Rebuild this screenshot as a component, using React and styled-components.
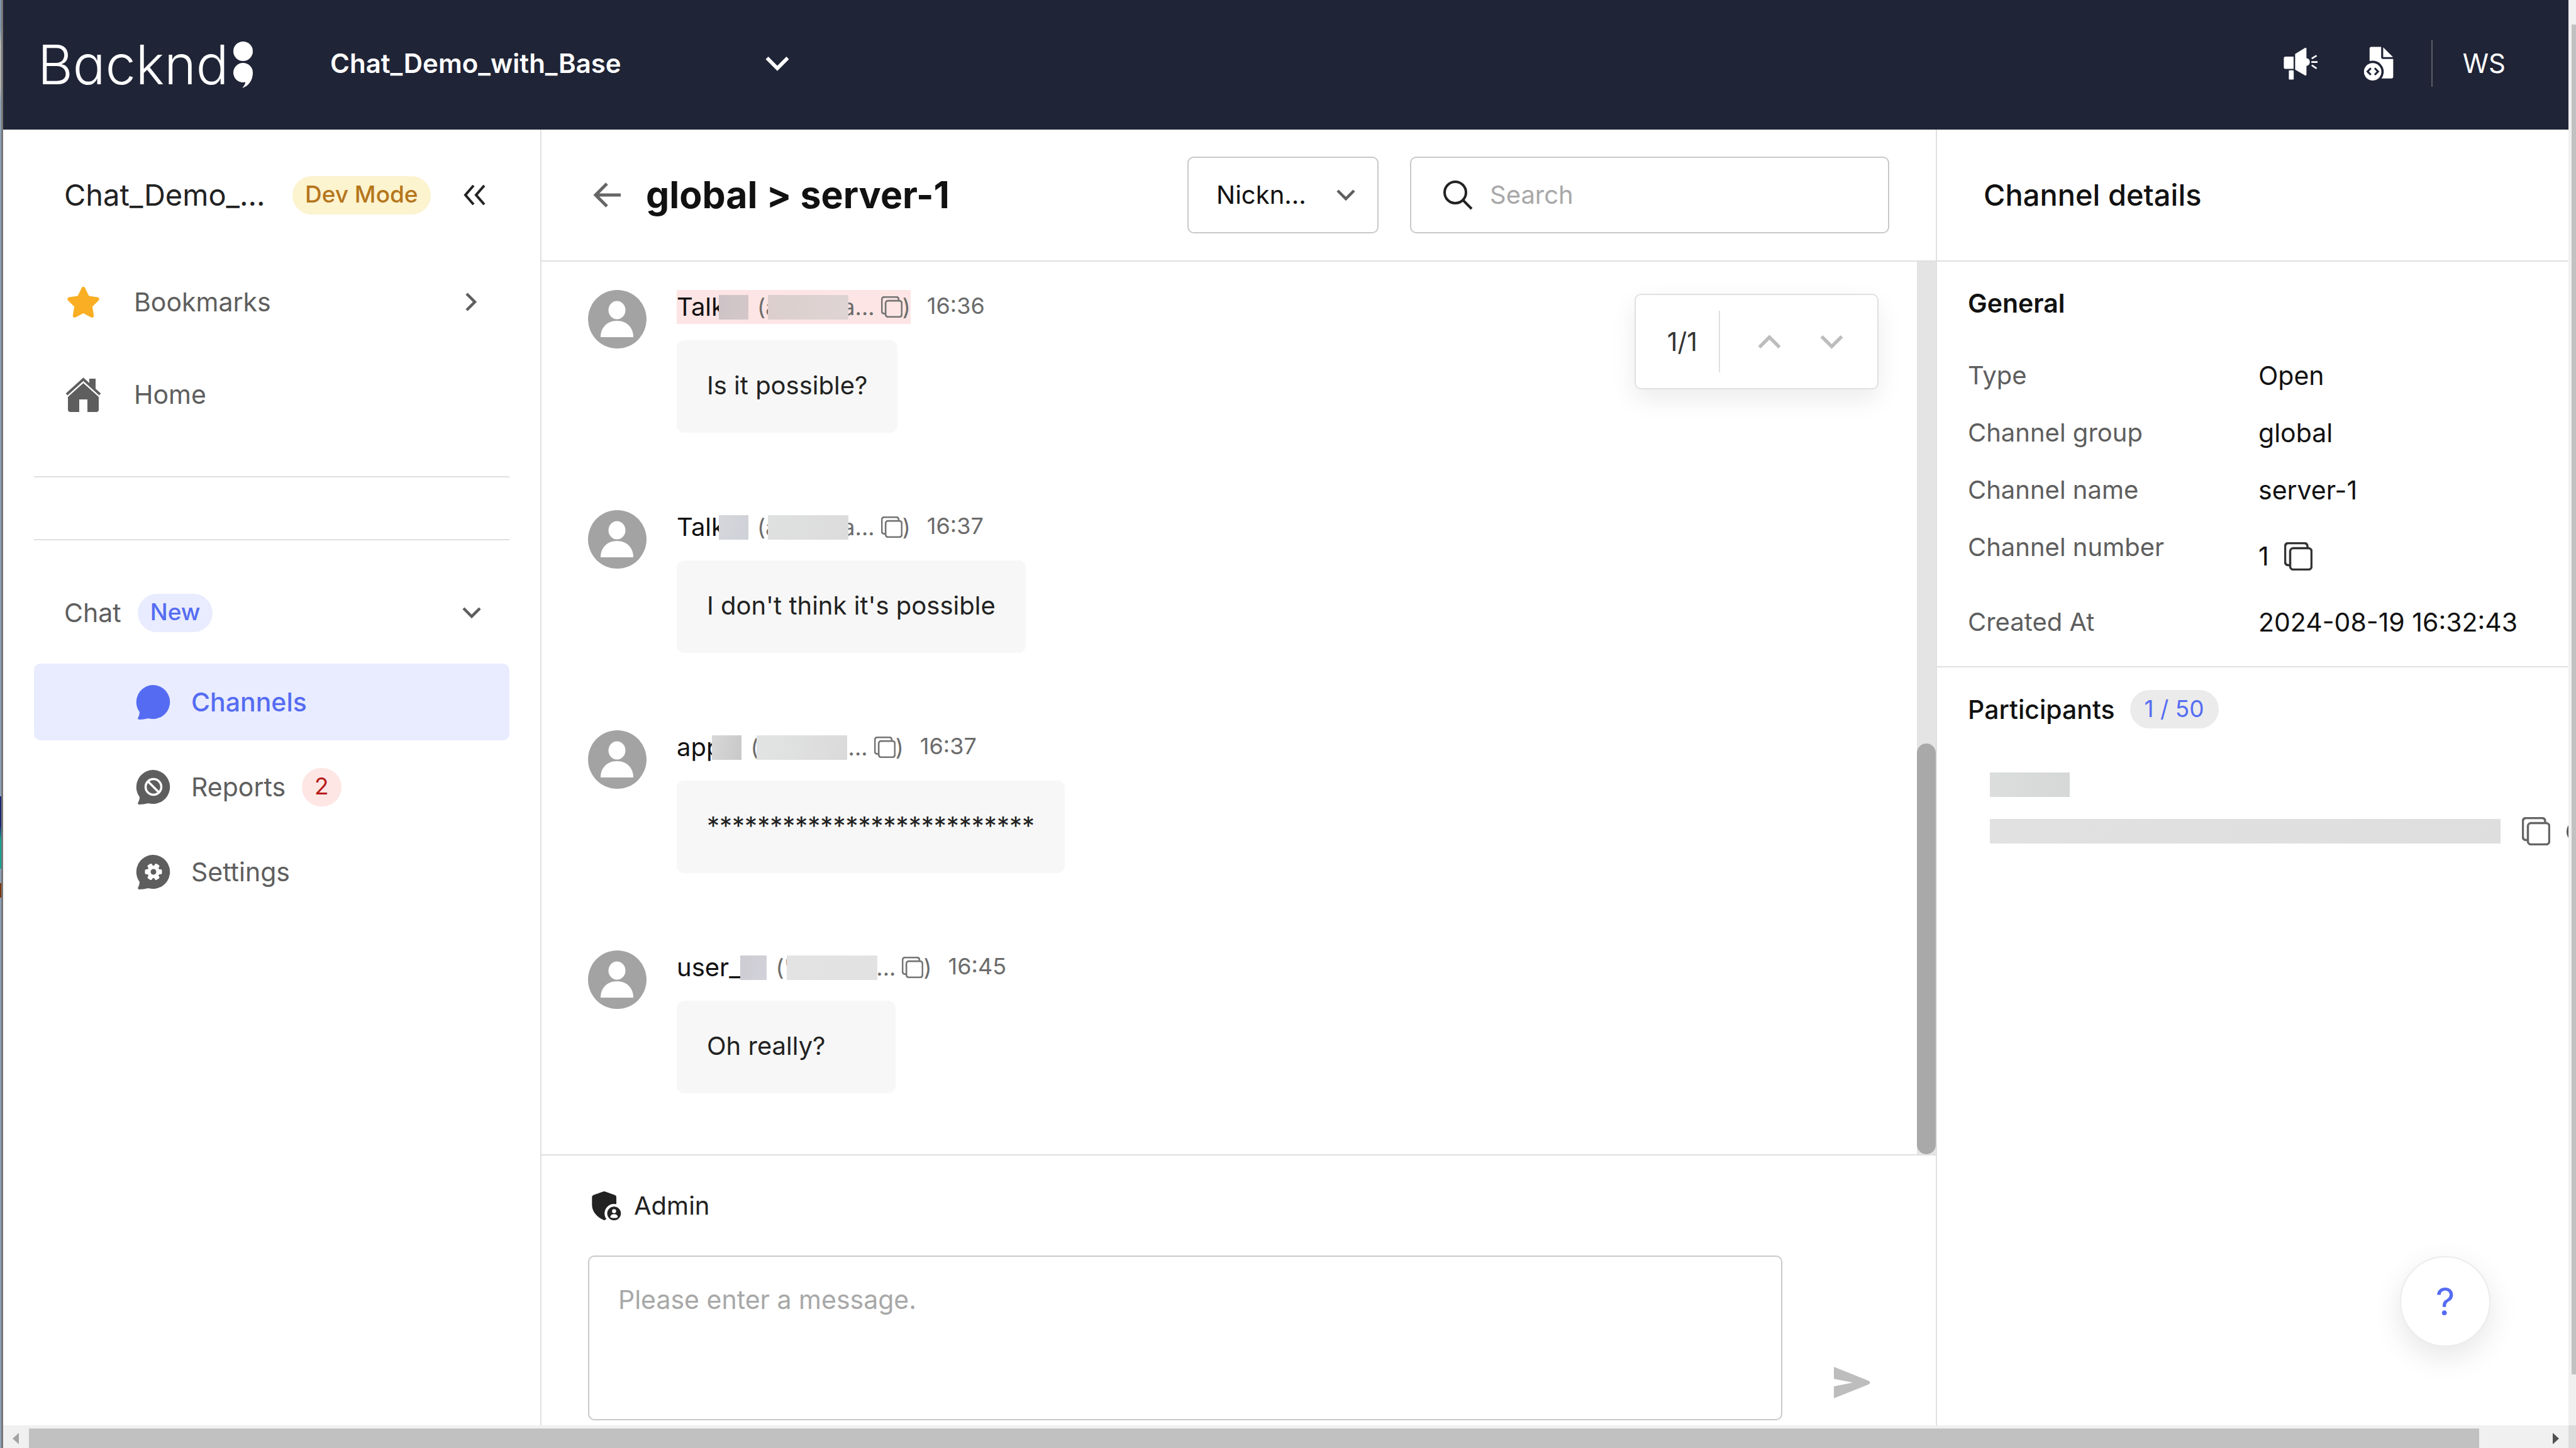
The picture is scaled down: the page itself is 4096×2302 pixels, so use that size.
import styled, { createGlobalStyle, css } from "styled-components";
import { FaStar } from "react-icons/fa6";

const GlobalStyle = createGlobalStyle`
    * {
        box-sizing: border-box;
    }

    body {
        margin: 0;
        font-family: Inter, "Liberation Sans", sans-serif;
        font-size: 41px;
        line-height: 60px;
        color: #111;
        background: #fff;
        overflow: hidden;
    }

    h1, h2, h3, p, ul, dl, dd {
        margin: 0;
        padding: 0;
    }

    ul {
        list-style: none;
    }

    svg {
        display: block;
        flex-shrink: 0;
    }

    button, input, select, textarea {
        font: inherit;
        color: inherit;
        background: none;
        border: 0;
        padding: 0;
        margin: 0;
        outline: none;
    }

    a {
        color: inherit;
        text-decoration: none;
    }
`

const Screen = styled.div`
    display: grid;
    grid-template-columns: 5px minmax(0, 1fr) 12px;
    grid-template-rows: minmax(0, 1fr) 36px;
    height: 100vh;
`

/* sliver of the desktop left of the browser window */
const DesktopEdge = styled.div`
    grid-row: 1 / 3;
    border-right: 3px solid #777;
    background: linear-gradient(
        #8098ae 2%, #b4b4b4 3%, #b4b4b4 6%, #8ca0b5 7%, #8ca0b5 55%,
        #1b2474 55%, #1b2474 57%, #12a594 58%, #12a594 60%, #8ca0b5 60%,
        #8ca0b5 61%, #7e3508 61%, #7e3508 62%, #8ca0b5 62%
    );
`

const Window = styled.div`
    display: flex;
    flex-direction: column;
    position: relative;
    overflow: hidden;
`

/* ---------- browser scrollbars ---------- */

const PageScrollY = styled.div`
    background: #f0f0f0;
    padding: 39px 0 81px 5px;
`

const PageScrollX = styled.div`
    display: flex;
    align-items: center;
    gap: 16px;
    background: #f0f0f0;
    padding: 5px 15px 0;
`

const Thumb = styled.div`
    flex: 1;
    height: 100%;
    background: #c1c1c1;
`

const ThumbSpace = styled.div`
    width: 85px;
`

const ScrollCorner = styled.div`
    background: #dcdcdc;
`

/* ---------- top bar ---------- */

const TopBar = styled.header`
    display: flex;
    align-items: center;
    height: 206px;
    padding: 0 100px 4px 55px;
    background: #1f2436;
    color: #fff;
`

const Logo = styled.a`
    display: flex;
    align-items: center;
    gap: 7px;
    width: 465px;
    padding-top: 4px;
    font-size: 86px;
    font-weight: 350;
    line-height: 74px;
    font-feature-settings: "cv11";
`

const SelectBox = styled.label`
    display: grid;
    grid-template-columns: 1fr auto;
    align-items: center;
    width: ${({ $width }) => $width}px;

    select {
        grid-area: 1 / 1 / 2 / 3;
        appearance: none;
        width: 100%;
        height: 122px;
    }

    svg {
        grid-area: 1 / 2;
        pointer-events: none;
    }
`

const ProjectSelect = styled(SelectBox)`
    font-size: 42px;
    font-weight: 600;

    option {
        color: #111;
    }
`

const TopActions = styled.div`
    display: flex;
    align-items: center;
    margin-left: auto;
`

const IconButton = styled.button`
    display: flex;
    align-items: center;
    justify-content: center;
    color: ${({ $color }) => $color || "inherit"};
`

const DocsButton = styled(IconButton)`
    margin: 0 59px 0 73px;
`

const UserButton = styled.button`
    border-left: 2px solid #5c5f69;
    height: 74px;
    padding-left: 48px;
    font-size: 42px;
`

/* ---------- sidebar ---------- */

const Columns = styled.div`
    display: flex;
    flex: 1;
    min-height: 0;
`

const Sidebar = styled.aside`
    width: 856px;
    flex-shrink: 0;
    padding: 0 49px;
    border-right: 2px solid #e0e0e0;
    color: #5e5e5e;
`

const SidebarHead = styled.div`
    display: flex;
    align-items: center;
    height: 208px;
    padding: 0 38px 0 48px;
`

const ProjectName = styled.h2`
    font-size: 47px;
    font-weight: 400;
    color: #222;
    width: 363px;
`

const tones = {
    yellow: css`
        background: #fcf3cf;
        color: #b5761b;
    `,
    blue: css`
        background: #e9ecfe;
        color: #556cf2;
    `,
    red: css`
        background: #fde6e4;
        color: #b71c1c;
    `,
    grey: css`
        background: #ebebeb;
        color: #556cf2;
    `,
}

const Pill = styled.span`
    display: inline-flex;
    align-items: center;
    justify-content: center;
    height: 61px;
    padding: 0 ${({ $tone }) => ($tone === "grey" ? 23 : 20)}px 2px;
    border-radius: 31px;
    font-size: 37px;
    font-weight: ${({ $tone }) => ($tone === "yellow" || $tone === "blue" ? 500 : 400)};
    ${({ $tone }) => tones[$tone]}
`

const CollapseButton = styled(IconButton)`
    margin-left: auto;
`

const NavList = styled.ul`
    display: flex;
    flex-direction: column;
    gap: 13px;
`

const NavLink = styled.a`
    display: flex;
    align-items: center;
    height: 134px;
    padding: 0 46px 2px 50px;
`

const NavIcon = styled.span`
    display: flex;
    justify-content: center;
    width: 57px;
    margin-right: 52px;
`

const NavChevron = styled.span`
    margin-left: auto;
`

const Rule = styled.hr`
    height: 2px;
    margin: ${({ $top }) => $top}px 0 0;
    border: 0;
    background: #e0e0e0;
`

const GroupButton = styled.button`
    display: flex;
    align-items: center;
    gap: 26px;
    width: 100%;
    height: 122px;
    margin: 54px 0 20px;
    padding: 0 45px 0 48px;

    svg {
        margin-left: auto;
    }
`

const SubLink = styled.a`
    display: flex;
    align-items: center;
    height: 122px;
    padding-left: 162px;
    border-radius: 10px;

    svg {
        margin-right: 33px;
    }

    ${Pill} {
        margin-left: 26px;
    }

    ${({ $active }) => $active && css`
        background: #e9ecfe;
        color: #556cf2;
        font-weight: 500;
    `}
`

/* ---------- chat ---------- */

const Main = styled.main`
    display: flex;
    flex-direction: column;
    flex: 1;
    min-width: 0;
`

const ChatHead = styled.div`
    display: flex;
    align-items: center;
    height: 210px;
    padding: 0 74px 0 82px;
    border-bottom: 2px solid #e0e0e0;
    font-size: 40px;
`

const ChatTitle = styled.h1`
    flex: 1;
    margin-left: 40px;
    font-size: 59px;
    font-weight: 700;
`

const KindSelect = styled(SelectBox)`
    select {
        padding-left: 44px;
        border: 2px solid #c9c9c9;
        border-radius: 10px;
    }

    svg {
        margin-right: 37px;
    }
`

const SearchBox = styled.label`
    display: flex;
    align-items: center;
    gap: 27px;
    width: 762px;
    height: 122px;
    margin-left: 50px;
    padding: 0 50px;
    border: 2px solid #c9c9c9;
    border-radius: 10px;

    input {
        flex: 1;
        min-width: 0;
    }

    input::placeholder {
        color: #a8a8a8;
        opacity: 1;
    }
`

const MessagePane = styled.div`
    display: flex;
    position: relative;
    flex: 1;
    min-height: 0;
`

const MessageList = styled.ul`
    flex: 1;
    padding: 45px 74px 0;
    overflow: hidden;
`

const Message = styled.li`
    display: flex;
    align-items: flex-start;
    gap: 48px;
    height: 350px;
`

const Meta = styled.div`
    display: flex;
    align-items: center;
    gap: 26px;
    height: 54px;
    margin-bottom: 26px;
    font-size: 36px;
    line-height: 50px;
    color: #6b6b6b;

    time {
        padding-bottom: 4px;
    }
`

const Sender = styled.mark`
    display: flex;
    align-items: center;
    height: 54px;
    color: inherit;
    background: ${({ $found }) => ($found ? "#fce5e4" : "none")};
`

const Nick = styled.span`
    font-size: 40px;
    color: #111;
`

/* blurred-out part of a name or an id */
const Mask = styled.span`
    position: relative;
    flex-shrink: 0;
    width: ${({ $width }) => $width}px;
    height: 39px;
    margin-left: -${({ $cut }) => $cut || 0}px;
    margin-right: ${({ $after }) => $after || 0}px;
    background: linear-gradient(100deg, ${({ $from }) => $from || "#dfe0e0"}, ${({ $to }) => $to || "#dcdcdc"});
`

const CopyButton = styled(IconButton)`
    margin-left: ${({ $gap }) => $gap || 0}px;
`

const Bubble = styled.p`
    width: fit-content;
    min-width: 348px;
    height: 147px;
    padding: 0 48px;
    border-radius: 12px;
    background: #f7f7f7;
    color: #222;
    font-size: 40px;
    line-height: 144px;
`

const ListScroll = styled.div`
    display: flex;
    align-items: flex-end;
    width: 30px;
    background: #e4e4e4;

    &::after {
        content: "";
        width: 100%;
        height: 46%;
        border-radius: 15px;
        background: #a9a9a9;
    }
`

const ResultNav = styled.div`
    display: flex;
    align-items: center;
    position: absolute;
    top: 51px;
    right: 91px;
    height: 152px;
    padding: 0 54px 0 50px;
    border: 2px solid #e0e0e0;
    border-radius: 10px;
    background: #fff;
    box-shadow: 0 16px 40px rgba(0, 0, 0, 0.08);
    color: #333;

    button + button {
        margin-left: 62px;
    }
`

const ResultCount = styled.span`
    height: 98px;
    margin-right: 60px;
    padding-right: 34px;
    border-right: 2px solid #e0e0e0;
    line-height: 98px;
`

const Composer = styled.form`
    padding: 57px 74px 8px;
    border-top: 2px solid #e0e0e0;
`

const SenderRole = styled.div`
    display: flex;
    align-items: center;
    gap: 20px;
    height: 46px;
    margin: 0 6px 56px;
    color: #222;
    font-size: 40px;
`

const ComposerRow = styled.div`
    display: flex;
    align-items: flex-end;

    textarea {
        flex: 1;
        height: 262px;
        padding: 38px 46px;
        border: 2px solid #c9c9c9;
        border-radius: 10px;
        resize: none;
    }

    textarea::placeholder {
        color: #a8a8a8;
        opacity: 1;
    }
`

const SendButton = styled(IconButton)`
    height: 120px;
    margin: 0 30px 0 82px;
`

/* ---------- details ---------- */

const Details = styled.aside`
    width: 1006px;
    flex-shrink: 0;
    border-left: 2px solid #e0e0e0;
    overflow: hidden;
`

const DetailsHead = styled.h2`
    height: 210px;
    padding-left: 74px;
    border-bottom: 2px solid #e0e0e0;
    font-size: 47px;
    font-weight: 500;
    line-height: 208px;
`

const Section = styled.section`
    padding: 36px 49px 40px;
    border-bottom: ${({ $last }) => ($last ? 0 : 2)}px solid #e0e0e0;
`

const SectionTitle = styled.h3`
    display: flex;
    align-items: center;
    gap: 24px;
    font-size: 41px;
    font-weight: ${({ $weight }) => $weight};
`

const Facts = styled.dl`
    display: flex;
    flex-direction: column;
    gap: 31px;
    margin-top: 55px;
`

const Fact = styled.div`
    display: grid;
    grid-template-columns: 462px 1fr;
    min-height: ${({ $tall }) => ($tall ? 88 : 60)}px;

    dt {
        font-size: 40px;
        color: #5e5e5e;
    }

    dd {
        display: flex;
        align-items: center;
        white-space: nowrap;
    }
`

const Participant = styled.div`
    display: flex;
    flex-direction: column;
    gap: 32px;
    margin: 70px 0 0 35px;
`

const ParticipantId = styled.div`
    display: flex;
    align-items: center;
    gap: 26px;
`

const HelpButton = styled.button`
    position: absolute;
    right: 124px;
    bottom: 125px;
    width: 144px;
    height: 144px;
    border: 2px solid #ececec;
    border-radius: 50%;
    background: #fff;
    box-shadow: 0 16px 48px rgba(0, 0, 0, 0.1);
    color: #556cf2;
    font-size: 60px;
`

/* ---------- icons ---------- */

const turns = { down: 0, left: 90, up: 180, right: 270 }

const Chevron = ({ dir = "down", size = 30, color = "currentColor" }) => (
    <svg width={size} height={size} viewBox="0 0 30 30" fill="none" stroke={color} strokeWidth="4.5">
        <path d="M2 8l13 13L28 8" transform={`rotate(${turns[dir]} 15 15)`} />
    </svg>
)

const LogoDots = () => (
    <svg width="31" height="74" viewBox="0 0 31 74" fill="#fff">
        <circle cx="15.5" cy="15.5" r="15.5" />
        <path d="M15.5 34A15.5 15.5 0 0 1 31 49.5C31 62 24 71 14 74C18 70 19 67 19 64.6A15.5 15.5 0 1 1 15.5 34z" />
    </svg>
)

const Megaphone = () => (
    <svg width="54" height="52" viewBox="108 192 264 252" fill="#fff">
        <path d="M124 264h62v96h-62q-14 0-14-14v-68q0-14 14-14z" />
        <path d="M198 243l80-49q8 0 8 8v74c18 2 26 14 26 30s-8 28-26 30v68q0 8-8 8l-80-46z" />
        <rect x="149" y="371" width="38" height="72" rx="6" />
        <path d="M327 280l38-24M324 306h48M327 331l38 25" stroke="#fff" strokeWidth="13" />
    </svg>
)

const DocIcon = () => (
    <svg width="49" height="54" viewBox="732 192 240 264" fill="#fff">
        <path d="M794 194h76v80q0 14 14 14h80v138q0 14-14 14H780V208q0-14 14-14z" />
        <path d="M886 198l76 76h-76z" />
        <circle cx="804" cy="388" r="86" fill="#1f2436" />
        <circle cx="804" cy="388" r="68" />
        <path d="M790 360l-26 26 26 26M820 360l26 26-26 26" fill="none" stroke="#1f2436" strokeWidth="15" />
    </svg>
)

const Collapse = () => (
    <svg width="36" height="32" viewBox="0 0 36 32" fill="none" stroke="#222" strokeWidth="4">
        <path d="M17 1L4 16l13 15M34 1L21 16l13 15" />
    </svg>
)

const HomeIcon = () => (
    <svg width="57" height="55" viewBox="0 0 57 55" fill="#5e5e5e">
        <path d="M2 27L28.5 3 55 27" fill="none" stroke="#5e5e5e" strokeWidth="4" />
        <path d="M38 2h10v17L38 10z" />
        <path d="M28.5 9L53 31v20q0 4-4 4H35V35H22v20H8q-4 0-4-4V31z" />
    </svg>
)

const ChatShape = ({ children }) => (
    <svg width="55" height="55" viewBox="0 0 55 55" fill="currentColor">
        <path d="M28 0a27 27 0 1 1-8 53q-8 2-15 2-3-1-1-4 2-4 2-8A27 27 0 0 1 28 0z" />
        {children}
    </svg>
)

const ReportIcon = () => (
    <ChatShape>
        <g fill="none" stroke="#fff" strokeWidth="3.5">
            <circle cx="28" cy="27" r="12.5" />
            <path d="M19 18l18 18" />
        </g>
    </ChatShape>
)

const GearIcon = () => (
    <ChatShape>
        <g fill="#fff">
            <circle cx="28" cy="27" r="10" />
            {[0, 60, 120].map(a => (
                <rect key={a} x="24" y="13.5" width="8" height="27" rx="2" transform={`rotate(${a + 30} 28 27)`} />
            ))}
        </g>
        <circle cx="28" cy="27" r="4.5" />
    </ChatShape>
)

const BackArrow = () => (
    <svg width="44" height="40" viewBox="0 0 44 40" fill="none" stroke="#666" strokeWidth="5">
        <path d="M44 20H4M22 2L4 20l18 18" />
    </svg>
)

const SearchIcon = () => (
    <svg width="48" height="48" viewBox="0 0 48 48" fill="none" stroke="#222" strokeWidth="4">
        <circle cx="20" cy="20" r="17" />
        <path d="M32 32l14 14" />
    </svg>
)

const CopyIcon = ({ size = 45, color = "#333" }) => (
    <svg width={size} height={size} viewBox="0 0 45 45" fill="none" stroke={color} strokeWidth="3.5">
        <rect x="9.5" y="9.5" width="34" height="34" rx="5" />
        <path d="M37 9V7q0-5.5-5.5-5.5H7Q1.5 1.5 1.5 7v24q0 5.5 5.5 5.5h2" />
    </svg>
)

const MoreIcon = () => (
    <svg width="36" height="36" viewBox="0 0 36 36" fill="#555">
        <circle cx="18" cy="18" r="18" />
    </svg>
)

const Avatar = () => (
    <svg width="93" height="93" viewBox="0 0 93 93" fill="#fff">
        <circle cx="46.5" cy="46.5" r="46.5" fill="#a3a3a3" />
        <ellipse cx="46" cy="32" rx="13.5" ry="14.5" />
        <path d="M20 75c0-15 10-26 26-26s26 11 26 26z" />
    </svg>
)

const AdminShield = () => (
    <svg width="47" height="46" viewBox="120 168 230 228" fill="#222">
        <path d="M206 170q10-3 20 0l76 28q10 4 10 15v60c0 55-40 100-96 123-56-23-96-68-96-123v-60q0-11 10-15z" />
        <circle cx="294" cy="342" r="75" fill="#fff" />
        <circle cx="294" cy="342" r="54" />
        <circle cx="294" cy="324" r="16" fill="#fff" />
        <path d="M264 372q2-24 30-24t30 24q-30 14-60 0z" fill="#fff" />
    </svg>
)

const SendIcon = () => (
    <svg width="58" height="50" viewBox="0 0 58 50" fill="#bdbdbd">
        <path d="M0 0l55 22q5 3 0 6L0 50V31l30-6-30-6z" />
    </svg>
)

const ScrollArrow = ({ dir, color }) => (
    <svg width="10" height="18" viewBox="0 0 10 18" fill={color}>
        <path d={dir === "left" ? "M10 0v18L0 9z" : "M0 0v18l10-9z"} />
    </svg>
)

/* ---------- data ---------- */

const messages = [
    {
        nick: "Talk", nickMask: { $width: 47, $cut: 10, $from: "#cdc3c6", $to: "#d3c7c9" },
        id: "(a", idMask: { $width: 128, $cut: 16, $after: -10, $from: "#dbcecd", $to: "#dfd4d4" }, tail: "a...",
        time: "16:36", text: "Is it possible?", found: true,
    },
    {
        nick: "Talk", nickMask: { $width: 47, $cut: 10, $from: "#d6d7dc", $to: "#cfd1d8" },
        id: "(a", idMask: { $width: 128, $cut: 16, $after: -10 }, tail: "a...",
        time: "16:37", text: "I don't think it's possible",
    },
    {
        nick: "app", nickMask: { $width: 47, $cut: 15, $from: "#d8d8d8", $to: "#c8c8c8" },
        id: "(", idMask: { $width: 144, $cut: 4, $after: 2, $from: "#e2e4e4", $to: "#dbdada" }, tail: "...",
        time: "16:37", text: "**************************",
    },
    {
        nick: "user_", nickMask: { $width: 42, $cut: 0, $from: "#ccccd2", $to: "#d3d2da" },
        id: "('", idMask: { $width: 144, $cut: 6, $after: -2, $from: "#e3e3e4", $to: "#e2e2e2" }, tail: "...",
        time: "16:45", text: "Oh really?",
    },
]

const App = () => {
    return (
        <>
            <GlobalStyle />
            <Screen>
                <DesktopEdge />
                <Window>
                    <TopBar>
                        <Logo href="#">
                            Backnd
                            <LogoDots />
                        </Logo>
                        <ProjectSelect $width={730}>
                            <select aria-label="Project">
                                <option>Chat_Demo_with_Base</option>
                            </select>
                            <Chevron size={38} />
                        </ProjectSelect>
                        <TopActions>
                            <IconButton aria-label="Notices"><Megaphone /></IconButton>
                            <DocsButton aria-label="Docs"><DocIcon /></DocsButton>
                            <UserButton>WS</UserButton>
                        </TopActions>
                    </TopBar>

                    <Columns>
                        <Sidebar>
                            <SidebarHead>
                                <ProjectName>Chat_Demo_...</ProjectName>
                                <Pill $tone="yellow">Dev Mode</Pill>
                                <CollapseButton aria-label="Collapse"><Collapse /></CollapseButton>
                            </SidebarHead>
                            <NavList>
                                <li>
                                    <NavLink href="#">
                                        <NavIcon><FaStar size={55} color="#f9ae23" /></NavIcon>
                                        Bookmarks
                                        <NavChevron><Chevron dir="right" /></NavChevron>
                                    </NavLink>
                                </li>
                                <li>
                                    <NavLink href="#">
                                        <NavIcon><HomeIcon /></NavIcon>
                                        Home
                                    </NavLink>
                                </li>
                            </NavList>
                            <Rule $top={62} />
                            <Rule $top={98} />
                            <GroupButton>
                                Chat
                                <Pill $tone="blue">New</Pill>
                                <Chevron />
                            </GroupButton>
                            <NavList>
                                <li><SubLink href="#" $active><ChatShape />Channels</SubLink></li>
                                <li>
                                    <SubLink href="#">
                                        <ReportIcon />
                                        Reports
                                        <Pill $tone="red">2</Pill>
                                    </SubLink>
                                </li>
                                <li><SubLink href="#"><GearIcon />Settings</SubLink></li>
                            </NavList>
                        </Sidebar>

                        <Main>
                            <ChatHead>
                                <IconButton aria-label="Back"><BackArrow /></IconButton>
                                <ChatTitle>global &gt; server-1</ChatTitle>
                                <KindSelect $width={304}>
                                    <select aria-label="Search by">
                                        <option>Nickn...</option>
                                    </select>
                                    <Chevron color="#5e5e5e" />
                                </KindSelect>
                                <SearchBox>
                                    <SearchIcon />
                                    <input type="text" placeholder="Search" aria-label="Search" />
                                </SearchBox>
                            </ChatHead>

                            <MessagePane>
                                <MessageList>
                                    {messages.map((m, i) => (
                                        <Message key={i}>
                                            <Avatar />
                                            <div>
                                                <Meta>
                                                    <Sender $found={m.found}>
                                                        <Nick>{m.nick}</Nick>
                                                        <Mask {...m.nickMask} $after={14} />
                                                        {m.id}
                                                        <Mask {...m.idMask} />
                                                        {m.tail}
                                                        <CopyButton $gap={10} aria-label="Copy id">
                                                            <CopyIcon size={34} color="#757575" />
                                                        </CopyButton>
                                                        )
                                                    </Sender>
                                                    <time>{m.time}</time>
                                                </Meta>
                                                <Bubble>{m.text}</Bubble>
                                            </div>
                                        </Message>
                                    ))}
                                </MessageList>
                                <ListScroll />
                                <ResultNav>
                                    <ResultCount>1/1</ResultCount>
                                    <IconButton aria-label="Previous result" $color="#bdbdbd"><Chevron dir="up" size={37} /></IconButton>
                                    <IconButton aria-label="Next result" $color="#bdbdbd"><Chevron size={37} /></IconButton>
                                </ResultNav>
                            </MessagePane>

                            <Composer>
                                <SenderRole>
                                    <AdminShield />
                                    Admin
                                </SenderRole>
                                <ComposerRow>
                                    <textarea placeholder="Please enter a message." aria-label="Message" />
                                    <SendButton type="button" aria-label="Send"><SendIcon /></SendButton>
                                </ComposerRow>
                            </Composer>
                        </Main>

                        <Details>
                            <DetailsHead>Channel details</DetailsHead>
                            <Section>
                                <SectionTitle $weight={600}>General</SectionTitle>
                                <Facts>
                                    <Fact><dt>Type</dt><dd>Open</dd></Fact>
                                    <Fact><dt>Channel group</dt><dd>global</dd></Fact>
                                    <Fact><dt>Channel name</dt><dd>server-1</dd></Fact>
                                    <Fact $tall>
                                        <dt>Channel number</dt>
                                        <dd>
                                            1
                                            <CopyButton $gap={24} aria-label="Copy channel number"><CopyIcon /></CopyButton>
                                        </dd>
                                    </Fact>
                                    <Fact><dt>Created At</dt><dd>2024-08-19 16:32:43</dd></Fact>
                                </Facts>
                            </Section>
                            <Section $last>
                                <SectionTitle $weight={500}>
                                    Participants
                                    <Pill $tone="grey">1 / 50</Pill>
                                </SectionTitle>
                                <Participant>
                                    <Mask $width={127} $from="#dcdedd" $to="#d6d8d7" />
                                    <ParticipantId>
                                        <Mask $width={812} $after={8} $from="#e2e1e1" $to="#dedede" />
                                        <IconButton aria-label="Copy id"><CopyIcon color="#666" /></IconButton>
                                        <IconButton aria-label="More"><MoreIcon /></IconButton>
                                    </ParticipantId>
                                </Participant>
                            </Section>
                        </Details>
                    </Columns>
                    <HelpButton aria-label="Help">?</HelpButton>
                </Window>

                <PageScrollY><Thumb /></PageScrollY>
                <PageScrollX>
                    <ScrollArrow dir="left" color="#a3a3a3" />
                    <Thumb />
                    <ThumbSpace />
                    <ScrollArrow dir="right" color="#505050" />
                </PageScrollX>
                <ScrollCorner />
            </Screen>
        </>
    )
}

export default App
